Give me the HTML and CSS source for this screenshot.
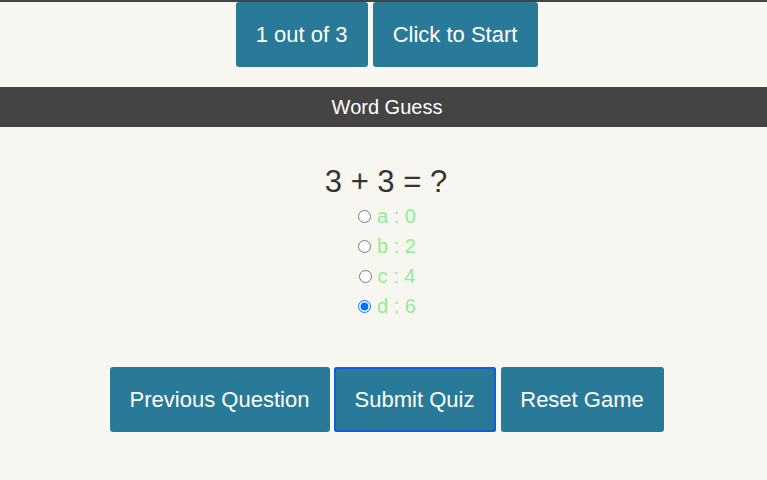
FILE: index.html
```html
<!DOCTYPE html>
<html>
<head>
<meta charset="utf-8">
<link rel="stylesheet" href="styles.css">
</head>
<body>
<div class="topline"></div>
<div class="top-row">
  <button class="btn btn-counter">1 out of 3</button>
  <button class="btn btn-start">Click to Start</button>
</div>
<div class="title-bar">Word Guess</div>
<div class="quiz">
  <div class="question">3 + 3 = ?</div>
  <label class="option"><input type="radio" name="q"><span>a : 0</span></label>
  <label class="option"><input type="radio" name="q"><span>b : 2</span></label>
  <label class="option"><input type="radio" name="q"><span>c : 4</span></label>
  <label class="option"><input type="radio" name="q" checked><span>d : 6</span></label>
</div>
<div class="bottom-row">
  <button class="btn btn-prev">Previous Question</button>
  <button class="btn btn-submit focused">Submit Quiz</button>
  <button class="btn btn-reset">Reset Game</button>
</div>
</body>
</html>
```
FILE: styles.css
```css
html, body {
  margin: 0;
  padding: 0;
  background: #f7f6f1;
  font-family: "Liberation Sans", Arial, sans-serif;
  height: 480px;
  overflow: hidden;
}
.topline {
  height: 2px;
  background: #444;
}
.top-row {
  display: flex;
  justify-content: center;
  gap: 5px;
  margin-left: 6px;
}
.btn {
  background: #297a98;
  color: #fff;
  border: 0;
  border-radius: 3px;
  font-family: "Liberation Sans", Arial, sans-serif;
  font-size: 22px;
  height: 65px;
  padding: 0;
  cursor: pointer;
}
.btn-counter { width: 132px; }
.btn-start { width: 165px; }
.title-bar {
  margin-top: 20px;
  height: 40px;
  background: #444;
  color: #fff;
  font-size: 20px;
  display: flex;
  align-items: center;
  justify-content: center;
  padding-left: 7px;
}
.quiz {
  display: flex;
  flex-direction: column;
  align-items: center;
  padding-top: 37px;
}
.question {
  font-size: 31px;
  color: #333;
  height: 36px;
  line-height: 36px;
  margin-bottom: 1px;
  margin-left: 5px;
}
.option {
  display: flex;
  align-items: center;
  height: 30px;
  font-size: 20px;
  color: #90ee90;
  margin-left: 7px;
}
.option input {
  margin: 0 6px 0 0;
  width: 13px;
  height: 13px;
}
.bottom-row {
  display: flex;
  justify-content: center;
  gap: 4px;
  margin-top: 46px;
  margin-left: 6px;
}
.btn-prev { width: 220px; }
.btn-submit { width: 162px; margin-right: 1px; }
.btn-reset { width: 163px; }
.focused {
  box-shadow: inset 0 0 0 2px #1160d6;
}
```
